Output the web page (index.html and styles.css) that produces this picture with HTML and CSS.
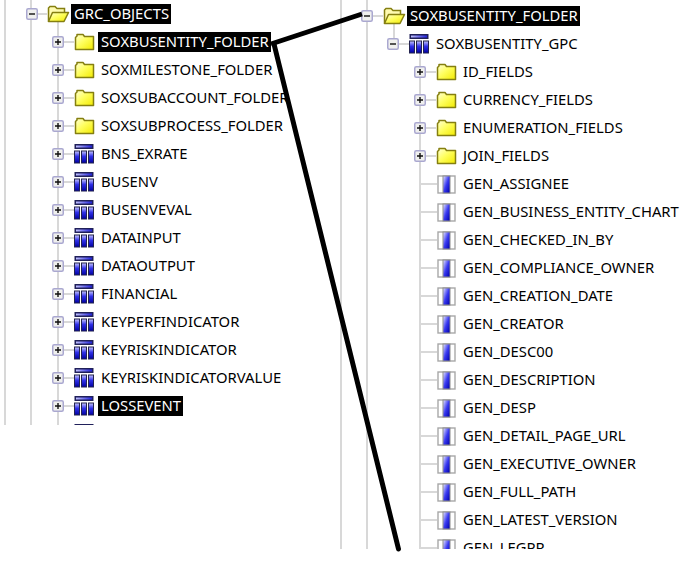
FILE: index.html
```html
<!DOCTYPE html>
<html lang="en">
<head>
<meta charset="utf-8">
<title>Object tree</title>
<link rel="stylesheet" href="styles.css">
</head>
<body>
<svg class="defs" width="0" height="0" aria-hidden="true">
  <defs>
    <linearGradient id="fy" x1="0" y1="0" x2="1" y2="1"><stop offset="0" stop-color="#ffffd8"/><stop offset="0.45" stop-color="#ffff60"/><stop offset="1" stop-color="#f2ea00"/></linearGradient>
    <linearGradient id="col" x1="0" y1="0" x2="0" y2="1"><stop offset="0" stop-color="#c8c8ff"/><stop offset="0.45" stop-color="#3030e8"/><stop offset="1" stop-color="#0000a0"/></linearGradient>
    <linearGradient id="bar" x1="0" y1="0" x2="1" y2="0"><stop offset="0" stop-color="#c0c0ff"/><stop offset="1" stop-color="#2020e0"/></linearGradient>
    <linearGradient id="fld" x1="0" y1="0" x2="1" y2="1"><stop offset="0" stop-color="#d8d8ff"/><stop offset="0.5" stop-color="#3a3af0"/><stop offset="1" stop-color="#0000b0"/></linearGradient>
    <symbol id="closed" viewBox="0 0 21 18"><path d="M1.500 16.500V4.500L3 3V1.500h6L10.500 3.500H19.500V16.500Z" fill="url(#fy)" stroke="#857f10" stroke-width="1.500" stroke-linejoin="round"/></symbol>
    <symbol id="open" viewBox="0 0 23 18"><path d="M1.500 16.500V3L3 1.500H8L10 3.500H17.500V7" fill="#fffbb0" stroke="#857f10" stroke-width="1.500"/><path d="M1.500 16.500L5.500 7.500H21.500L17 16.500Z" fill="url(#fy)" stroke="#857f10" stroke-width="1.500" stroke-linejoin="round"/></symbol>
    <symbol id="table" viewBox="0 0 20 20"><rect x="0.500" y="0" width="19" height="5" fill="#20205a"/><rect x="2" y="1.500" width="16" height="2" fill="url(#bar)"/><rect x="0.500" y="7" width="5" height="12" fill="url(#col)" stroke="#23234f"/><rect x="7.500" y="7" width="5" height="12" fill="url(#col)" stroke="#23234f"/><rect x="14.500" y="7" width="5" height="12" fill="url(#col)" stroke="#23234f"/></symbol>
    <symbol id="field" viewBox="0 0 19 19"><rect x="1" y="1" width="17" height="17" fill="#fff" stroke="#a8a8a8" stroke-width="1.400"/><rect x="5.500" y="0.500" width="8" height="18" fill="#8c8c8c"/><rect x="6.500" y="1.500" width="6" height="16" fill="url(#fld)"/></symbol>
    <symbol id="plus" viewBox="0 0 12 12"><rect x="0.750" y="0.750" width="10.500" height="10.500" rx="1.500" fill="#f0f0ee" stroke="#aaa8d0" stroke-width="1.500"/><path d="M3 6H9M6 3V9" stroke="#111" stroke-width="1.400"/></symbol>
    <symbol id="minus" viewBox="0 0 12 12"><rect x="0.750" y="0.750" width="10.500" height="10.500" rx="1.500" fill="#f0f0ee" stroke="#aaa8d0" stroke-width="1.500"/><path d="M3 6H9" stroke="#111" stroke-width="1.400"/></symbol>
  </defs>
</svg>

<main class="stage">
  <section class="tree tree-left">
    <div class="row lv-a"><svg class="exp"><use href="#minus"/></svg><i class="wire wire-root"></i><svg class="ico ico-open"><use href="#open"/></svg><span class="label sel">GRC_OBJECTS</span></div>
    <div class="row lv-b"><svg class="exp"><use href="#plus"/></svg><i class="wire"></i><svg class="ico ico-folder"><use href="#closed"/></svg><span class="label sel">SOXBUSENTITY_FOLDER</span></div>
    <div class="row lv-b"><svg class="exp"><use href="#plus"/></svg><i class="wire"></i><svg class="ico ico-folder"><use href="#closed"/></svg><span class="label">SOXMILESTONE_FOLDER</span></div>
    <div class="row lv-b"><svg class="exp"><use href="#plus"/></svg><i class="wire"></i><svg class="ico ico-folder"><use href="#closed"/></svg><span class="label">SOXSUBACCOUNT_FOLDER</span></div>
    <div class="row lv-b"><svg class="exp"><use href="#plus"/></svg><i class="wire"></i><svg class="ico ico-folder"><use href="#closed"/></svg><span class="label">SOXSUBPROCESS_FOLDER</span></div>
    <div class="row lv-b"><svg class="exp"><use href="#plus"/></svg><i class="wire"></i><svg class="ico ico-table"><use href="#table"/></svg><span class="label">BNS_EXRATE</span></div>
    <div class="row lv-b"><svg class="exp"><use href="#plus"/></svg><i class="wire"></i><svg class="ico ico-table"><use href="#table"/></svg><span class="label">BUSENV</span></div>
    <div class="row lv-b"><svg class="exp"><use href="#plus"/></svg><i class="wire"></i><svg class="ico ico-table"><use href="#table"/></svg><span class="label">BUSENVEVAL</span></div>
    <div class="row lv-b"><svg class="exp"><use href="#plus"/></svg><i class="wire"></i><svg class="ico ico-table"><use href="#table"/></svg><span class="label">DATAINPUT</span></div>
    <div class="row lv-b"><svg class="exp"><use href="#plus"/></svg><i class="wire"></i><svg class="ico ico-table"><use href="#table"/></svg><span class="label">DATAOUTPUT</span></div>
    <div class="row lv-b"><svg class="exp"><use href="#plus"/></svg><i class="wire"></i><svg class="ico ico-table"><use href="#table"/></svg><span class="label">FINANCIAL</span></div>
    <div class="row lv-b"><svg class="exp"><use href="#plus"/></svg><i class="wire"></i><svg class="ico ico-table"><use href="#table"/></svg><span class="label">KEYPERFINDICATOR</span></div>
    <div class="row lv-b"><svg class="exp"><use href="#plus"/></svg><i class="wire"></i><svg class="ico ico-table"><use href="#table"/></svg><span class="label">KEYRISKINDICATOR</span></div>
    <div class="row lv-b"><svg class="exp"><use href="#plus"/></svg><i class="wire"></i><svg class="ico ico-table"><use href="#table"/></svg><span class="label">KEYRISKINDICATORVALUE</span></div>
    <div class="row lv-b"><svg class="exp"><use href="#plus"/></svg><i class="wire"></i><svg class="ico ico-table"><use href="#table"/></svg><span class="label sel">LOSSEVENT</span></div>
    <div class="row lv-b"><span class="exp"></span><i class="wire wire-none"></i><svg class="ico ico-table"><use href="#table"/></svg></div>
  </section>

  <section class="tree tree-right">
    <div class="row rv-a"><svg class="exp"><use href="#minus"/></svg><i class="wire"></i><svg class="ico ico-open"><use href="#open"/></svg><span class="label sel">SOXBUSENTITY_FOLDER</span></div>
    <div class="row rv-b"><svg class="exp"><use href="#minus"/></svg><i class="wire"></i><svg class="ico ico-table"><use href="#table"/></svg><span class="label">SOXBUSENTITY_GPC</span></div>
    <div class="row rv-c"><svg class="exp"><use href="#plus"/></svg><i class="wire"></i><svg class="ico ico-folder"><use href="#closed"/></svg><span class="label">ID_FIELDS</span></div>
    <div class="row rv-c"><svg class="exp"><use href="#plus"/></svg><i class="wire"></i><svg class="ico ico-folder"><use href="#closed"/></svg><span class="label">CURRENCY_FIELDS</span></div>
    <div class="row rv-c"><svg class="exp"><use href="#plus"/></svg><i class="wire"></i><svg class="ico ico-folder"><use href="#closed"/></svg><span class="label">ENUMERATION_FIELDS</span></div>
    <div class="row rv-c"><svg class="exp"><use href="#plus"/></svg><i class="wire"></i><svg class="ico ico-folder"><use href="#closed"/></svg><span class="label">JOIN_FIELDS</span></div>
    <div class="row rv-d"><i class="wire wire-leaf"></i><svg class="ico ico-field"><use href="#field"/></svg><span class="label">GEN_ASSIGNEE</span></div>
    <div class="row rv-d"><i class="wire wire-leaf"></i><svg class="ico ico-field"><use href="#field"/></svg><span class="label">GEN_BUSINESS_ENTITY_CHART</span></div>
    <div class="row rv-d"><i class="wire wire-leaf"></i><svg class="ico ico-field"><use href="#field"/></svg><span class="label">GEN_CHECKED_IN_BY</span></div>
    <div class="row rv-d"><i class="wire wire-leaf"></i><svg class="ico ico-field"><use href="#field"/></svg><span class="label">GEN_COMPLIANCE_OWNER</span></div>
    <div class="row rv-d"><i class="wire wire-leaf"></i><svg class="ico ico-field"><use href="#field"/></svg><span class="label">GEN_CREATION_DATE</span></div>
    <div class="row rv-d"><i class="wire wire-leaf"></i><svg class="ico ico-field"><use href="#field"/></svg><span class="label">GEN_CREATOR</span></div>
    <div class="row rv-d"><i class="wire wire-leaf"></i><svg class="ico ico-field"><use href="#field"/></svg><span class="label">GEN_DESC00</span></div>
    <div class="row rv-d"><i class="wire wire-leaf"></i><svg class="ico ico-field"><use href="#field"/></svg><span class="label">GEN_DESCRIPTION</span></div>
    <div class="row rv-d"><i class="wire wire-leaf"></i><svg class="ico ico-field"><use href="#field"/></svg><span class="label">GEN_DESP</span></div>
    <div class="row rv-d"><i class="wire wire-leaf"></i><svg class="ico ico-field"><use href="#field"/></svg><span class="label">GEN_DETAIL_PAGE_URL</span></div>
    <div class="row rv-d"><i class="wire wire-leaf"></i><svg class="ico ico-field"><use href="#field"/></svg><span class="label">GEN_EXECUTIVE_OWNER</span></div>
    <div class="row rv-d"><i class="wire wire-leaf"></i><svg class="ico ico-field"><use href="#field"/></svg><span class="label">GEN_FULL_PATH</span></div>
    <div class="row rv-d"><i class="wire wire-leaf"></i><svg class="ico ico-field"><use href="#field"/></svg><span class="label">GEN_LATEST_VERSION</span></div>
    <div class="row rv-d"><i class="wire wire-leaf"></i><svg class="ico ico-field"><use href="#field"/></svg><span class="label">GEN_LEGPR</span></div>
  </section>

  <svg class="callout" width="683" height="563" viewBox="0 0 683 563" aria-hidden="true">
    <path d="M271 44L362 14" stroke="#000" stroke-width="5" fill="none"/>
    <path d="M274 44L398.500 549" stroke="#000" stroke-width="5" stroke-linecap="round" fill="none"/>
  </svg>
</main>
</body>
</html>
```

FILE: styles.css
```css
* { box-sizing: border-box; }

html, body {
  margin: 0;
  padding: 0;
  background: #fff;
}

body {
  width: 683px;
  height: 563px;
  overflow: hidden;
  font-family: "Noto Sans", "Open Sans", sans-serif;
  font-size: 14.8px;
  color: #000;
}

.defs { display: block; height: 0; }

.stage {
  position: relative;
  display: flex;
  align-items: flex-start;
  width: 683px;
  height: 563px;
}

.tree {
  flex: none;
  overflow: hidden;
  background-repeat: no-repeat;
}

.tree-left {
  width: 340px;
  height: 425px;
  background-image:
    linear-gradient(#d8d8d8, #d8d8d8),
    linear-gradient(#d8d8d8, #d8d8d8),
    linear-gradient(#d8d8d8, #d8d8d8);
  background-size: 2px 100%;
  background-position: 4px 0, 30px 0, 57px 14px;
}

.tree-right {
  width: 343px;
  height: 549px;
  padding-top: 2px;
  background-image:
    linear-gradient(#d8d8d8, #d8d8d8),
    linear-gradient(#d8d8d8, #d8d8d8),
    linear-gradient(#d8d8d8, #d8d8d8),
    linear-gradient(#d8d8d8, #d8d8d8);
  background-size: 2px 100%, 2px 100%, 2px 30px, 2px 100%;
  background-position: 0 0, 26px 0, 53px 16px, 79px 44px;
}

.row {
  display: flex;
  align-items: center;
  height: 28px;
  white-space: nowrap;
}

.lv-a { padding-left: 26px; }
.lv-b { padding-left: 52px; }
.rv-a { padding-left: 21px; }
.rv-b { padding-left: 47px; }
.rv-c { padding-left: 74px; }
.rv-d { padding-left: 80px; }

.exp {
  flex: none;
  display: block;
  width: 12px;
  height: 12px;
}

.wire {
  flex: none;
  display: block;
  width: 10px;
  height: 2px;
  background: #d8d8d8;
}

.wire-root { width: 9px; }
.wire-none { background: transparent; }
.wire-leaf { width: 17px; }

.ico {
  flex: none;
  display: block;
}

.ico-open   { width: 23px; height: 18px; }
.ico-folder { width: 21px; height: 18px; }
.ico-table  { width: 20px; height: 20px; }
.ico-field  { width: 19px; height: 19px; }

.label {
  display: block;
  margin-left: 4px;
  padding: 0 2px 0 3px;
  height: 20px;
  line-height: 18px;
}

.ico-folder + .label { margin-left: 3px; }
.ico-open + .label { margin-left: 1px; }

.sel {
  background: #000;
  color: #fff;
}

.callout {
  position: absolute;
  left: 0;
  top: 0;
  pointer-events: none;
}
```
